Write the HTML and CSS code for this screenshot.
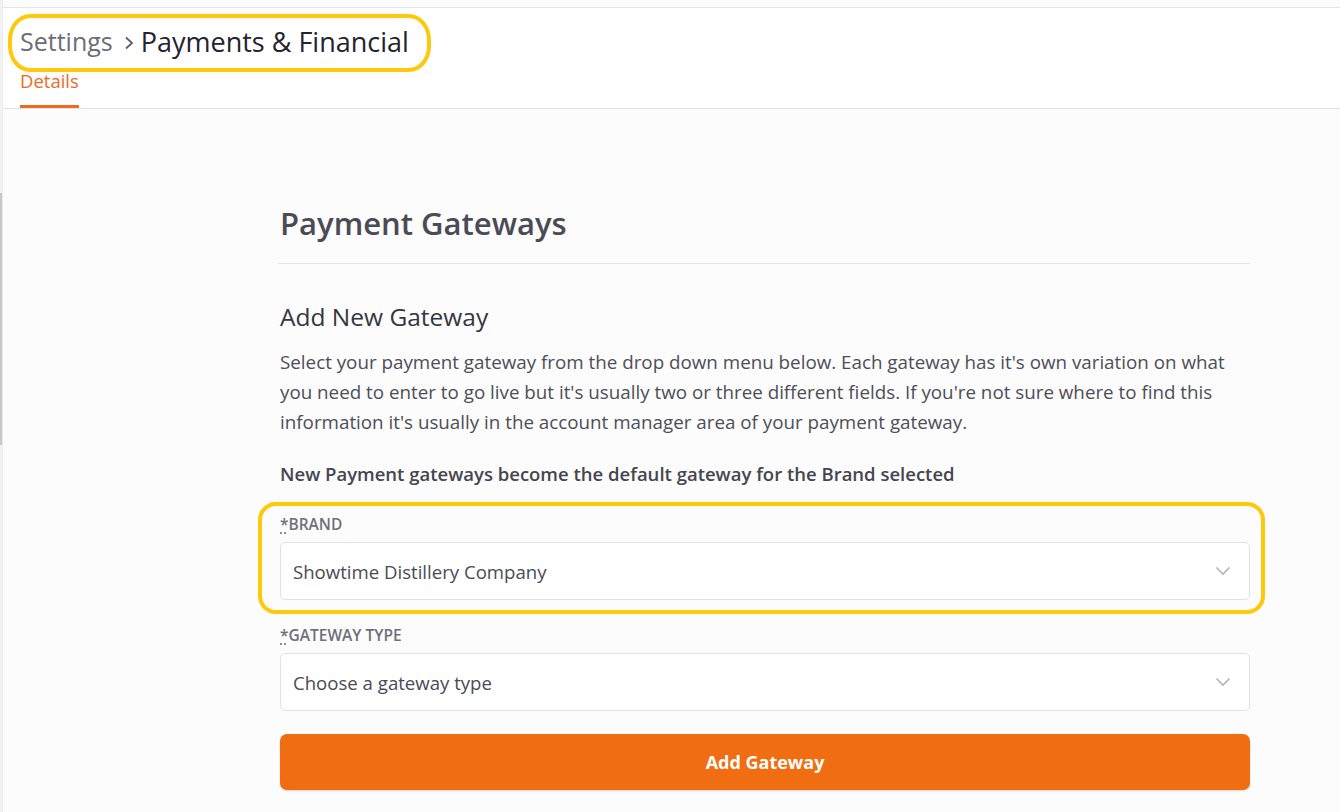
FILE: index.html
```html
<!DOCTYPE html>
<html lang="en">
<head>
<meta charset="utf-8">
<title>Settings - Payments &amp; Financial</title>
<link rel="stylesheet" href="styles.css">
</head>
<body>
<div class="app">
  <div class="gutter"><div class="gutter-thumb"></div></div>
  <div class="main">
    <div class="topstrip"></div>
    <header class="header">
      <div class="crumb-wrap">
        <nav class="breadcrumb">
          <span class="crumb-parent">Settings</span>
          <svg class="crumb-sep" width="12" height="16" viewBox="0 0 12 16"><path d="M3 2.5 L9 8 L3 13.5" fill="none" stroke="#5d6069" stroke-width="1.8"/></svg>
          <span class="crumb-current">Payments &amp; Financial</span>
        </nav>
        <div class="mark mark-crumb"></div>
      </div>
      <div class="tabs">
        <a class="tab active">Details</a>
      </div>
    </header>
    <section class="content">
      <h1 class="page-title">Payment Gateways</h1>
      <hr class="divider">
      <h2 class="section-title">Add New Gateway</h2>
      <p class="intro">Select your payment gateway from the drop down menu below. Each gateway has it's own variation on what you need to enter to go live but it's usually two or three different fields. If you're not sure where to find this information it's usually in the account manager area of your payment gateway.</p>
      <p class="note">New Payment gateways become the default gateway for the Brand selected</p>
      <div class="field field-brand">
        <label class="field-label"><abbr title="required">*</abbr>BRAND</label>
        <div class="select">
          <span class="select-value">Showtime Distillery Company</span>
          <svg class="chev" width="16" height="10" viewBox="0 0 16 10"><path d="M1.5 1.5 L8 8 L14.5 1.5" fill="none" stroke="#b3b3bb" stroke-width="1.6"/></svg>
        </div>
        <div class="mark mark-brand"></div>
      </div>
      <div class="field">
        <label class="field-label"><abbr title="required">*</abbr>GATEWAY TYPE</label>
        <div class="select">
          <span class="select-value">Choose a gateway type</span>
          <svg class="chev" width="16" height="10" viewBox="0 0 16 10"><path d="M1.5 1.5 L8 8 L14.5 1.5" fill="none" stroke="#b3b3bb" stroke-width="1.6"/></svg>
        </div>
      </div>
      <button class="btn-primary">Add Gateway</button>
    </section>
  </div>
</div>
</body>
</html>
```

FILE: styles.css
```css
* { box-sizing: border-box; }
html, body { margin: 0; padding: 0; }
body {
  background: #fcfcfc;
  font-family: "Open Sans", "Noto Sans", "Liberation Sans", sans-serif;
  color: #4a4b55;
  width: 1340px;
  height: 812px;
  overflow: hidden;
}
.app { display: flex; min-height: 812px; }
.gutter {
  width: 3px;
  flex: none;
  background: #f2f2f2;
  border-right: 1px solid #ececec;
}
.gutter-thumb {
  margin-top: 193px;
  height: 252px;
  width: 2px;
  background: #c9c9c9;
}
.main { flex: 1; }
.topstrip {
  height: 8px;
  border-bottom: 1px solid #e4e4e4;
  background: #fcfcfc;
}
.header {
  background: #fff;
  border-bottom: 1px solid #e2e2e2;
  padding: 14px 0 0 17px;
  height: 101px;
}
.crumb-wrap { position: relative; display: inline-block; }
.breadcrumb {
  display: flex;
  align-items: center;
  gap: 6px;
  height: 38px;
}
.crumb-parent { font-size: 25px; color: #6b6e77; }
.crumb-sep { margin: 3px 0 0 4px; }
.crumb-current { font-size: 27px; color: #23242d; font-weight: 500; }
.mark {
  position: absolute;
  border: 4px solid #fec80b;
  pointer-events: none;
}
.mark-crumb { left: -12px; right: -22px; top: -8px; bottom: -12px; border-radius: 22px / 26px; }
.tabs { display: flex; margin-top: 9px; }
.tab {
  font-size: 18.5px;
  color: #ef6a1f;
  padding: 2px 0 14px;
  border-bottom: 3px solid #ef6a1f;
  line-height: 20px;
}
.content {
  margin-left: 277px;
  width: 970px;
  padding-top: 92px;
}
.page-title {
  margin: 0;
  font-size: 31px;
  font-weight: 600;
  color: #4a4b55;
  line-height: 44px;
}
.divider {
  border: 0;
  border-top: 1px solid #e3e3e3;
  margin: 18px 0 0 -2px;
}
.section-title {
  margin: 37px 0 0;
  font-size: 24.5px;
  font-weight: 500;
  color: #35363f;
  line-height: 32px;
}
.intro {
  margin: 14px 0 0;
  font-size: 18.8px;
  line-height: 30px;
  color: #4d4e58;
}
.note {
  margin: 25px 0 0;
  font-size: 18.5px;
  font-weight: 600;
  color: #45464f;
  line-height: 24px;
}
.field { position: relative; margin-top: 28px; }
.field + .field { margin-top: 25px; }
.field-label {
  display: block;
  font-size: 15.5px;
  font-weight: 600;
  color: #6e7079;
  line-height: 20px;
  margin-bottom: 8px;
}
.field-label abbr { text-decoration: underline dotted; text-underline-offset: 3px; }
.select {
  height: 58px;
  border: 1px solid #e2e2e4;
  border-radius: 5px;
  background: #fff;
  display: flex;
  align-items: center;
  justify-content: space-between;
  padding: 0 18px 0 12px;
}
.select-value { font-size: 18.6px; color: #4a4b55; }
.mark-brand { left: -22px; right: -15px; top: -12px; bottom: -14px; border-radius: 18px; }
.btn-primary {
  display: block;
  width: 100%;
  margin-top: 23px;
  height: 56px;
  border: 0;
  border-radius: 7px;
  background: #f06e11;
  color: #fff;
  font-family: inherit;
  font-size: 18px;
  font-weight: 700;
  box-shadow: 0 1px 2px rgba(0,0,0,0.15);
}
```
